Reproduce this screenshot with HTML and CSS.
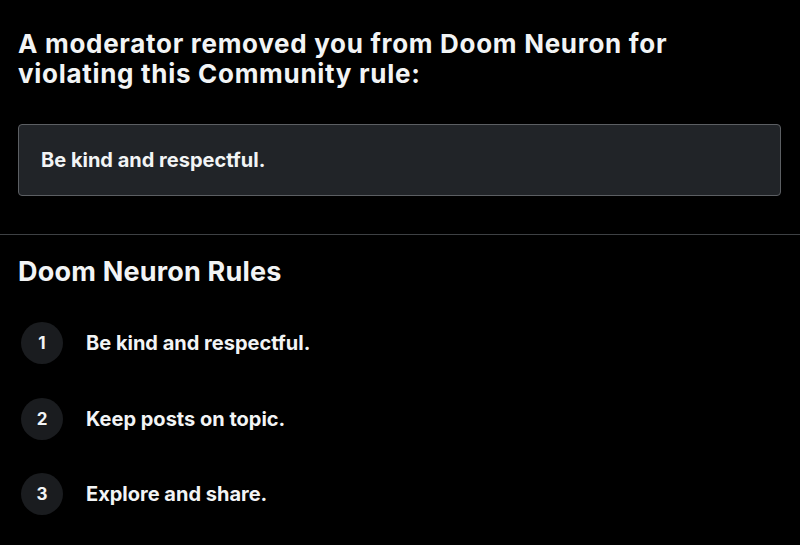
FILE: index.html
```html
<!DOCTYPE html>
<html>
<head>
<meta charset="utf-8">
<link rel="stylesheet" href="styles.css">
</head>
<body>
<main class="page">
  <section class="removed">
    <h1 class="title">A moderator removed you from Doom Neuron for violating this Community rule:</h1>
    <div class="rule-box">Be kind and respectful.</div>
  </section>
  <hr class="divider">
  <section class="rules">
    <h2 class="rules-title">Doom Neuron Rules</h2>
    <ol class="rule-list">
      <li class="rule"><span class="num">1</span><span class="rule-text">Be kind and respectful.</span></li>
      <li class="rule"><span class="num">2</span><span class="rule-text">Keep posts on topic.</span></li>
      <li class="rule"><span class="num">3</span><span class="rule-text">Explore and share.</span></li>
    </ol>
  </section>
</main>
</body>
</html>
```
FILE: styles.css
```css
html, body {
  margin: 0;
  padding: 0;
  background: #000;
}
body {
  width: 800px;
  height: 545px;
  overflow: hidden;
  font-family: Inter, "Noto Sans", sans-serif;
  color: #f2f4f5;
}
.page {
  display: flex;
  flex-direction: column;
}
.removed {
  padding: 29px 19px 0 18px;
}
.title {
  margin: 0;
  max-width: 700px;
  font-size: 26px;
  letter-spacing: 0.7px;
  line-height: 30px;
  font-weight: 700;
}
.rule-box {
  margin-top: 35px;
  height: 72px;
  box-sizing: border-box;
  border: 1px solid #5c5f63;
  border-radius: 4px;
  background: #212428;
  padding: 0 22px;
  display: flex;
  align-items: center;
  font-size: 20px;
  font-weight: 700;
}
.divider {
  margin: 38px 0 0 0;
  border: 0;
  border-top: 1px solid #3e4144;
  height: 0;
}
.rules {
  padding: 0 18px;
}
.rules-title {
  margin: 22px 0 0 0;
  font-size: 27px;
  letter-spacing: 0.2px;
  line-height: 30px;
  font-weight: 700;
}
.rule-list {
  list-style: none;
  margin: 35px 0 0 3px;
  padding: 0;
  display: flex;
  flex-direction: column;
  gap: 33.5px;
}
.rule {
  display: flex;
  align-items: center;
  gap: 23px;
}
.num {
  width: 42px;
  height: 42px;
  flex: none;
  border-radius: 50%;
  background: #1a1c1f;
  display: flex;
  align-items: center;
  justify-content: center;
  font-size: 17px;
  font-weight: 700;
}
.rule-text {
  font-size: 20px;
  font-weight: 700;
}
```
